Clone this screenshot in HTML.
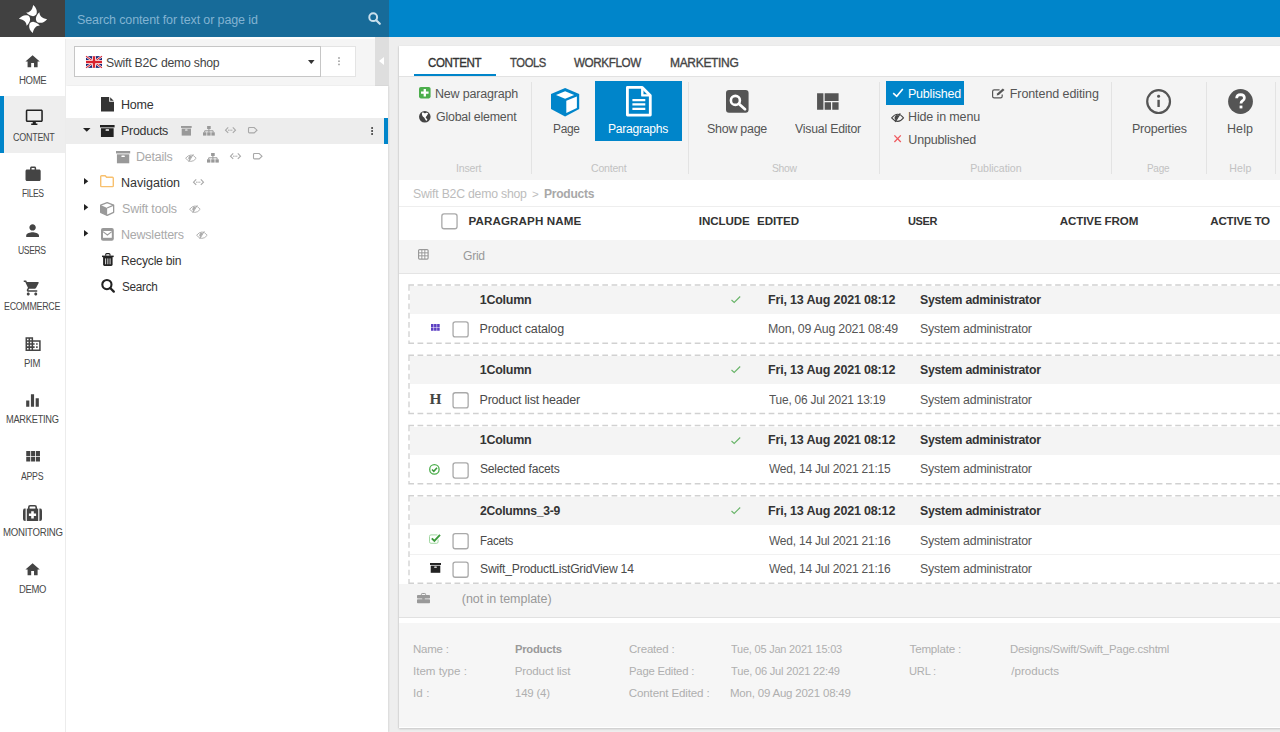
<!DOCTYPE html>
<html lang="en"><head><meta charset="utf-8"><title>Swift B2C demo shop - Products</title>
<style>
html,body{margin:0;padding:0;}
body{width:1280px;height:732px;overflow:hidden;position:relative;background:#eeeeee;font-family:"Liberation Sans",sans-serif;}
.b{position:absolute;}
.t{position:absolute;transform-origin:0 50%;white-space:pre;line-height:16px;height:16px;font-family:"Liberation Sans",sans-serif;}
svg{position:absolute;overflow:visible;}
.cb{position:absolute;width:14px;height:14px;border:1.3px solid #ababab;border-radius:2.5px;background:#fff;}
.sep{position:absolute;top:81.5px;height:92px;width:1px;background:#e3e3e3;}

</style></head>
<body>
<div class="b" style="left:0px;top:0px;width:65px;height:37px;background:#414141;"></div>
<div class="b" style="left:65px;top:0px;width:324px;height:37px;background:#176b99;"></div>
<div class="b" style="left:389px;top:0px;width:891px;height:37px;background:#0085ca;"></div>
<div class="b" style="left:0px;top:37px;width:65px;height:695px;background:#fff;"></div>
<div class="b" style="left:65px;top:37px;width:1px;height:695px;background:#ececec;"></div>
<div class="b" style="left:0px;top:96px;width:65px;height:56.5px;background:#eeeeee;"></div>
<div class="b" style="left:0px;top:96px;width:4px;height:56.5px;background:#0085ca;"></div>
<div class="b" style="left:66px;top:37px;width:323px;height:49px;background:#f5f5f5;"></div>
<div class="b" style="left:65px;top:37px;width:310px;height:1.7px;background:#fdfdfd;"></div><!--whiteband-->
<div class="b" style="left:375px;top:37px;width:14px;height:49px;background:#dedede;"></div>
<div class="b" style="left:66px;top:86px;width:322px;height:646px;background:#fff;box-shadow:1px 0 1.5px rgba(0,0,0,.09);"></div>
<div class="b" style="left:66px;top:118px;width:322px;height:26px;background:#ededed;"></div>
<div class="b" style="left:384px;top:118px;width:4px;height:26px;background:#0085ca;"></div>
<div class="b" style="left:74.3px;top:46.3px;width:247px;height:31px;background:#fff;box-sizing:border-box;border:1px solid #c6c6c6;"></div>
<div class="b" style="left:321.3px;top:46.3px;width:35px;height:31px;background:#fff;box-sizing:border-box;border:1px solid #e4e4e4;border-left:none;"></div>
<div class="b" style="left:398.8px;top:46.2px;width:890px;height:681.6px;background:#fff;box-shadow:0 1px 2px rgba(0,0,0,.17), -1px 0 1px rgba(0,0,0,.04);"></div>
<div class="b" style="left:413.5px;top:74px;width:82px;height:2px;background:#0085ca;"></div>
<div class="b" style="left:399px;top:76px;width:890px;height:1px;background:#e2e2e2;"></div>
<div class="b" style="left:399px;top:77px;width:890px;height:103px;background:#f4f4f4;"></div>
<div class="sep" style="left:530.5px"></div>
<div class="sep" style="left:687.5px"></div>
<div class="sep" style="left:879.0px"></div>
<div class="sep" style="left:1110.5px"></div>
<div class="sep" style="left:1205.5px"></div>
<div class="sep" style="left:1275.0px"></div>
<div class="b" style="left:595px;top:81.25px;width:87.3px;height:59.5px;background:#0085ca;"></div>
<div class="b" style="left:886px;top:81.25px;width:77.8px;height:23.3px;background:#0085ca;"></div>
<div class="b" style="left:399px;top:206px;width:890px;height:1px;background:#eeeeee;"></div>
<div class="b" style="left:399px;top:240px;width:890px;height:33.5px;background:#f4f4f4;"></div>
<div class="b" style="left:399px;top:273px;width:890px;height:1px;background:#e4e4e4;"></div>
<div class="b" style="left:410px;top:286px;width:880px;height:28px;background:#f4f4f4;"></div>
<svg style="left:0;top:0" width="1280" height="732"><path d="M408.3 285.0H1290M409 285.0V343.25M408.3 343.25H1290" fill="none" stroke="#d1d1d1" stroke-width="1.35" stroke-dasharray="5.7 3.54"/></svg>
<div class="b" style="left:410px;top:356.25px;width:880px;height:28px;background:#f4f4f4;"></div>
<svg style="left:0;top:0" width="1280" height="732"><path d="M408.3 355.25H1290M409 355.25V413.5M408.3 413.5H1290" fill="none" stroke="#d1d1d1" stroke-width="1.35" stroke-dasharray="5.7 3.54"/></svg>
<div class="b" style="left:410px;top:426.5px;width:880px;height:28px;background:#f4f4f4;"></div>
<svg style="left:0;top:0" width="1280" height="732"><path d="M408.3 425.5H1290M409 425.5V483.75M408.3 483.75H1290" fill="none" stroke="#d1d1d1" stroke-width="1.35" stroke-dasharray="5.7 3.54"/></svg>
<div class="b" style="left:410px;top:496.75px;width:880px;height:28px;background:#f4f4f4;"></div>
<svg style="left:0;top:0" width="1280" height="732"><path d="M408.3 495.75H1290M409 495.75V583.25M408.3 583.25H1290" fill="none" stroke="#d1d1d1" stroke-width="1.35" stroke-dasharray="5.7 3.54"/></svg>
<div class="b" style="left:410px;top:553.5px;width:880px;height:1px;background:#f1f1f1;"></div>
<div class="b" style="left:399px;top:584px;width:890px;height:33.5px;background:#f4f4f4;"></div>
<div class="b" style="left:399px;top:617px;width:890px;height:1.1px;background:#e1e1e1;"></div>
<div class="b" style="left:399px;top:623px;width:890px;height:104px;background:#f6f6f6;"></div>
<svg style="left:0;top:0" width="1280" height="732"><rect x="441.85" y="213.95" width="15.20" height="14.80" rx="2.2" fill="#fff" stroke="#a9a9a9" stroke-width="1.3"/></svg>
<svg style="left:0;top:0" width="1280" height="732"><rect x="453.05" y="321.85" width="15.10" height="15.10" rx="2.2" fill="#fff" stroke="#a9a9a9" stroke-width="1.3"/></svg>
<svg style="left:0;top:0" width="1280" height="732"><rect x="453.05" y="392.75" width="15.10" height="15.10" rx="2.2" fill="#fff" stroke="#a9a9a9" stroke-width="1.3"/></svg>
<svg style="left:0;top:0" width="1280" height="732"><rect x="453.05" y="462.95" width="15.10" height="15.10" rx="2.2" fill="#fff" stroke="#a9a9a9" stroke-width="1.3"/></svg>
<svg style="left:0;top:0" width="1280" height="732"><rect x="453.05" y="533.65" width="15.10" height="15.10" rx="2.2" fill="#fff" stroke="#a9a9a9" stroke-width="1.3"/></svg>
<svg style="left:0;top:0" width="1280" height="732"><rect x="453.05" y="562.15" width="15.10" height="15.10" rx="2.2" fill="#fff" stroke="#a9a9a9" stroke-width="1.3"/></svg>
<svg style="left:16.6px;top:2.6000000000000014px" width="32" height="32" viewBox="-16 -16 32 32" ><path d="M0.2,-14.1 C2.9,-11.8 4.4,-8.8 3.7,-5.7 C3.3,-3.7 1.4,-2.7 -0.8,-2.9 C-3.2,-3.3 -5.2,-4.6 -6.8,-6.4 C-3.2,-6.5 -0.8,-8.8 0.2,-14.1 Z" fill="#fff" transform="rotate(0)"/><path d="M0.2,-14.1 C2.9,-11.8 4.4,-8.8 3.7,-5.7 C3.3,-3.7 1.4,-2.7 -0.8,-2.9 C-3.2,-3.3 -5.2,-4.6 -6.8,-6.4 C-3.2,-6.5 -0.8,-8.8 0.2,-14.1 Z" fill="#fff" transform="rotate(90)"/><path d="M0.2,-14.1 C2.9,-11.8 4.4,-8.8 3.7,-5.7 C3.3,-3.7 1.4,-2.7 -0.8,-2.9 C-3.2,-3.3 -5.2,-4.6 -6.8,-6.4 C-3.2,-6.5 -0.8,-8.8 0.2,-14.1 Z" fill="#fff" transform="rotate(180)"/><path d="M0.2,-14.1 C2.9,-11.8 4.4,-8.8 3.7,-5.7 C3.3,-3.7 1.4,-2.7 -0.8,-2.9 C-3.2,-3.3 -5.2,-4.6 -6.8,-6.4 C-3.2,-6.5 -0.8,-8.8 0.2,-14.1 Z" fill="#fff" transform="rotate(270)"/></svg>
<svg style="left:24.15px;top:52.61px" width="17.2" height="17.2" viewBox="0 0 24 24" ><path d="M10 20v-6h4v6h5v-8h3L12 3 2 12h3v8z" fill="#444"/></svg>
<svg style="left:25.3px;top:108.4px" width="18.6" height="18.6" viewBox="0 0 24 24" ><path d="M21 2H3c-1.1 0-2 .9-2 2v12c0 1.1.9 2 2 2h7v2H8v2h8v-2h-2v-2h7c1.1 0 2-.9 2-2V4c0-1.1-.9-2-2-2zm0 14H3V4h18v12z" fill="#222"/></svg>
<svg style="left:23.5px;top:165.38px" width="18.2" height="18.2" viewBox="0 0 24 24" ><path d="M20 6h-4V4c0-1.11-.89-2-2-2h-4c-1.11 0-2 .89-2 2v2H4c-1.11 0-1.99.89-1.99 2L2 19c0 1.11.89 2 2 2h16c1.11 0 2-.89 2-2V8c0-1.11-.89-2-2-2zm-6 0h-4V4h4v2z" fill="#444"/></svg>
<svg style="left:23.15px;top:221.35px" width="19.2" height="19.2" viewBox="0 0 24 24" ><path d="M12 12c2.21 0 4-1.79 4-4s-1.79-4-4-4-4 1.79-4 4 1.79 4 4 4zm0 2c-2.67 0-8 1.34-8 4v2h16v-2c0-2.66-5.33-4-8-4z" fill="#444"/></svg>
<svg style="left:23.38px;top:278.5px" width="18" height="18" viewBox="0 0 24 24" ><path d="M7 18c-1.1 0-1.99.9-1.99 2S5.9 22 7 22s2-.9 2-2-.9-2-2-2zM1 2v2h2l3.6 7.59-1.35 2.45c-.16.28-.25.61-.25.96 0 1.1.9 2 2 2h12v-2H7.42c-.14 0-.25-.11-.25-.25l.03-.12.9-1.63h7.45c.75 0 1.41-.41 1.75-1.03l3.58-6.49c.08-.14.12-.31.12-.48 0-.55-.45-1-1-1H5.21l-.94-2H1zm16 16c-1.1 0-1.99.9-1.99 2s.89 2 1.99 2 2-.9 2-2-.9-2-2-2z" fill="#444"/></svg>
<svg style="left:23.6px;top:334.85px" width="18.2" height="18.2" viewBox="0 0 24 24" ><path d="M12 7V3H2v18h20V7H12zM6 19H4v-2h2v2zm0-4H4v-2h2v2zm0-4H4V9h2v2zm0-4H4V5h2v2zm4 12H8v-2h2v2zm0-4H8v-2h2v2zm0-4H8V9h2v2zm0-4H8V5h2v2zm10 12h-8v-2h2v-2h-2v-2h2v-2h-2V9h8v10zm-2-8h-2v2h2v-2zm0 4h-2v2h2v-2z" fill="#444"/></svg>
<svg style="left:23.4px;top:391.15px" width="19" height="19" viewBox="0 0 24 24" ><path d="M10 20h4V4h-4v16zm-6 0h4v-8H4v8zM16 9v11h4V9h-4z" fill="#444"/></svg>
<svg style="left:23.05px;top:447.15px" width="19.4" height="19.4" viewBox="0 0 24 24" ><path d="M4 11h5V5H4v6zm0 7h5v-6H4v6zm6 0h5v-6h-5v6zm6 0h5v-6h-5v6zm-6-7h5V5h-5v6zm6-6v6h5V5h-5z" fill="#444"/></svg>
<svg style="left:24.15px;top:561.21px" width="17.2" height="17.2" viewBox="0 0 24 24" ><path d="M10 20v-6h4v6h5v-8h3L12 3 2 12h3v8z" fill="#444"/></svg>
<svg style="left:23.4px;top:505px" width="19" height="16" viewBox="0 0 19 16" ><path d="M5.8 4V2.2Q5.8 .8 7.2 .8H11.8Q13.2 .8 13.2 2.2V4" fill="none" stroke="#444" stroke-width="1.6"/><path d="M2 3.6H2.6V16H2Q0 16 0 14V5.6Q0 3.6 2 3.6Z" fill="#444"/><path d="M17 3.6H16.4V16H17Q19 16 19 14V5.6Q19 3.6 17 3.6Z" fill="#444"/><rect x="3.8" y="3.6" width="11.4" height="12.4" fill="#444"/><path d="M8.2 6.2H10.8V8.5H13.1V11.1H10.8V13.4H8.2V11.1H5.9V8.5H8.2Z" fill="#fff"/></svg>
<svg style="left:368px;top:12px" width="13" height="13" viewBox="0 0 13 13" ><circle cx="5.2" cy="5.2" r="3.9" fill="none" stroke="#c9dfec" stroke-width="2"/><path d="M8.2 8.2L11.8 11.8" stroke="#c9dfec" stroke-width="2.2" stroke-linecap="round"/></svg>
<svg style="left:379px;top:56.8px" width="5" height="8" viewBox="0 0 5 8" ><path d="M5 0V8L0 4Z" fill="#fff"/></svg>
<svg style="left:86px;top:56px" width="16" height="12" viewBox="0 0 60 44" ><rect width="60" height="44" fill="#1b2a7a"/><path d="M0 0L60 44M60 0L0 44" stroke="#fff" stroke-width="9"/><path d="M0 0L60 44M60 0L0 44" stroke="#d8232f" stroke-width="4"/><path d="M30 0V44M0 22H60" stroke="#fff" stroke-width="15"/><path d="M30 0V44M0 22H60" stroke="#d8232f" stroke-width="9"/></svg>
<svg style="left:308.4px;top:59.7px" width="6.6" height="4.1" viewBox="0 0 6.6 4.1" ><path d="M0 0H6.6L3.3 4.1Z" fill="#333"/></svg>
<svg style="left:337.7px;top:57.3px" width="2" height="8.4" viewBox="0 0 2 8.4" ><circle cx="1" cy="1" r=".9" fill="#a0a0a0"/><circle cx="1" cy="4.2" r=".9" fill="#a0a0a0"/><circle cx="1" cy="7.4" r=".9" fill="#a0a0a0"/></svg>
<svg style="left:370.8px;top:126.6px" width="2.2" height="8" viewBox="0 0 2.2 8" ><circle cx="1.1" cy="1" r="1" fill="#333"/><circle cx="1.1" cy="4" r="1" fill="#333"/><circle cx="1.1" cy="7" r="1" fill="#333"/></svg>
<svg style="left:101.2px;top:96.5px" width="13" height="14.5" viewBox="0 0 13 14.5" ><path d="M0 0H8.2V4.8H13V14.5H0Z" fill="#333"/><path d="M9.2 0.3L12.7 3.8H9.2Z" fill="#333"/></svg>
<svg style="left:82.8px;top:127.7px" width="7.5" height="3.8" viewBox="0 0 7.5 3.8" ><path d="M0 0H7.5L3.75 3.8Z" fill="#222"/></svg>
<svg style="left:84.4px;top:178.0px" width="4.3" height="6.4" viewBox="0 0 4.3 6.4" ><path d="M0 0L4.3 3.2L0 6.4Z" fill="#222"/></svg>
<svg style="left:84.4px;top:203.70000000000002px" width="4.3" height="6.4" viewBox="0 0 4.3 6.4" ><path d="M0 0L4.3 3.2L0 6.4Z" fill="#222"/></svg>
<svg style="left:84.4px;top:229.60000000000002px" width="4.3" height="6.4" viewBox="0 0 4.3 6.4" ><path d="M0 0L4.3 3.2L0 6.4Z" fill="#222"/></svg>
<svg style="left:100.2px;top:124.8px" width="14.6" height="12" viewBox="0 0 14.6 12" ><rect x="0" y="0" width="14.6" height="2.40" fill="#222"/><rect x="0.95" y="3.24" width="12.70" height="8.76" fill="#222"/><rect x="5.55" y="4.32" width="3.50" height="1.44" rx="0.5" fill="#fff"/></svg>
<svg style="left:115.5px;top:150.6px" width="14.2" height="12.3" viewBox="0 0 14.2 12.3" ><rect x="0" y="0" width="14.2" height="2.46" fill="#999"/><rect x="0.92" y="3.32" width="12.35" height="8.98" fill="#999"/><rect x="5.40" y="4.43" width="3.41" height="1.48" rx="0.5" fill="#fff"/></svg>
<svg style="left:181.1px;top:126.4px" width="10.7" height="9.6" viewBox="0 0 10.7 9.6" ><rect x="0" y="0" width="10.7" height="1.92" fill="#999"/><rect x="0.70" y="2.59" width="9.31" height="7.01" fill="#999"/><rect x="4.07" y="3.46" width="2.57" height="1.15" rx="0.5" fill="#fff"/></svg>
<svg style="left:429.8px;top:563.3px" width="11" height="9.8" viewBox="0 0 11 9.8" ><rect x="0" y="0" width="11" height="1.96" fill="#222"/><rect x="0.72" y="2.65" width="9.57" height="7.15" fill="#222"/><rect x="4.18" y="3.53" width="2.64" height="1.18" rx="0.5" fill="#fff"/></svg>
<svg style="left:202.8px;top:126.4px" width="11.8" height="9.6" viewBox="0 0 11.8 9.6" ><rect x="4.1" y="0" width="3.6" height="3" fill="#999"/><path d="M5.9 3V4.8M1.7 6.4V4.8H10.1V6.4M5.9 4.8V6.4" stroke="#999" stroke-width="1" fill="none"/><rect x="0" y="6.3" width="3.4" height="3.3" fill="#999"/><rect x="4.2" y="6.3" width="3.4" height="3.3" fill="#999"/><rect x="8.4" y="6.3" width="3.4" height="3.3" fill="#999"/></svg>
<svg style="left:206.9px;top:152.5px" width="11.8" height="9.6" viewBox="0 0 11.8 9.6" ><rect x="4.1" y="0" width="3.6" height="3" fill="#999"/><path d="M5.9 3V4.8M1.7 6.4V4.8H10.1V6.4M5.9 4.8V6.4" stroke="#999" stroke-width="1" fill="none"/><rect x="0" y="6.3" width="3.4" height="3.3" fill="#999"/><rect x="4.2" y="6.3" width="3.4" height="3.3" fill="#999"/><rect x="8.4" y="6.3" width="3.4" height="3.3" fill="#999"/></svg>
<svg style="left:225.2px;top:127.2px" width="11" height="6.4" viewBox="0 0 11 6.4" ><path d="M3.2 .4L.5 3.2L3.2 6M7.8 .4L10.5 3.2L7.8 6" fill="none" stroke="#a8a8a8" stroke-width="1.1"/><path d="M3 3.2H8" stroke="#a8a8a8" stroke-width="1" stroke-dasharray="1.6 .7"/></svg>
<svg style="left:229.5px;top:153.4px" width="11" height="6.4" viewBox="0 0 11 6.4" ><path d="M3.2 .4L.5 3.2L3.2 6M7.8 .4L10.5 3.2L7.8 6" fill="none" stroke="#a8a8a8" stroke-width="1.1"/><path d="M3 3.2H8" stroke="#a8a8a8" stroke-width="1" stroke-dasharray="1.6 .7"/></svg>
<svg style="left:192.5px;top:179px" width="11" height="6.4" viewBox="0 0 11 6.4" ><path d="M3.2 .4L.5 3.2L3.2 6M7.8 .4L10.5 3.2L7.8 6" fill="none" stroke="#a8a8a8" stroke-width="1.1"/><path d="M3 3.2H8" stroke="#a8a8a8" stroke-width="1" stroke-dasharray="1.6 .7"/></svg>
<svg style="left:248.3px;top:127.2px" width="9.6" height="6.4" viewBox="0 0 9.6 6.4" ><path d="M1.4 .5H6.2L9 3.2L6.2 5.9H1.4Q.5 5.9 .5 5V1.4Q.5 .5 1.4 .5Z" fill="none" stroke="#a8a8a8" stroke-width="1.1"/></svg>
<svg style="left:252.6px;top:153.4px" width="9.6" height="6.4" viewBox="0 0 9.6 6.4" ><path d="M1.4 .5H6.2L9 3.2L6.2 5.9H1.4Q.5 5.9 .5 5V1.4Q.5 .5 1.4 .5Z" fill="none" stroke="#a8a8a8" stroke-width="1.1"/></svg>
<svg style="left:184.8px;top:153.6px" width="11.8" height="8.2" viewBox="0 0 11.8 8.2" ><path d="M.6 4.3Q3.2 1 6 1Q8.8 1 11.2 4.3Q8.8 7.4 6 7.4Q3.2 7.4 .6 4.3Z" fill="none" stroke="#aaa" stroke-width="0.9"/><path d="M6.9 2.1A2.3 2.3 0 1 0 4.5 6.3Z" fill="#aaa"/><path d="M8.3 .2L3.7 8" stroke="#aaa" stroke-width="1.0"/></svg>
<svg style="left:189px;top:205px" width="11.8" height="8.2" viewBox="0 0 11.8 8.2" ><path d="M.6 4.3Q3.2 1 6 1Q8.8 1 11.2 4.3Q8.8 7.4 6 7.4Q3.2 7.4 .6 4.3Z" fill="none" stroke="#aaa" stroke-width="0.9"/><path d="M6.9 2.1A2.3 2.3 0 1 0 4.5 6.3Z" fill="#aaa"/><path d="M8.3 .2L3.7 8" stroke="#aaa" stroke-width="1.0"/></svg>
<svg style="left:196.2px;top:231px" width="11.8" height="8.2" viewBox="0 0 11.8 8.2" ><path d="M.6 4.3Q3.2 1 6 1Q8.8 1 11.2 4.3Q8.8 7.4 6 7.4Q3.2 7.4 .6 4.3Z" fill="none" stroke="#aaa" stroke-width="0.9"/><path d="M6.9 2.1A2.3 2.3 0 1 0 4.5 6.3Z" fill="#aaa"/><path d="M8.3 .2L3.7 8" stroke="#aaa" stroke-width="1.0"/></svg>
<svg style="left:100.2px;top:175.1px" width="14" height="12.3" viewBox="0 0 14 12.3" ><path d="M1.6 .7H5.2L6.6 2.3H12.4Q13.3 2.3 13.3 3.2V10.7Q13.3 11.6 12.4 11.6H1.6Q.7 11.6 .7 10.7V1.6Q.7 .7 1.6 .7Z" fill="#fff" stroke="#f8c06e" stroke-width="1.4"/></svg>
<svg style="left:99.9px;top:201.8px" width="14.3" height="14" viewBox="0 0 14.3 14" ><path d="M7.15 0.65L13.65 3.08V10.36L7.15 13.35L0.65 10.36V3.08Z" fill="#fff" stroke="#999" stroke-width="1.3" stroke-linejoin="round"/><path d="M0.65 3.08L7.15 6.02V13.35L0.65 10.36Z" fill="#999"/><path d="M7.15 6.02L13.65 3.08" stroke="#999" stroke-width="1.3" fill="none"/></svg>
<svg style="left:101.2px;top:228.1px" width="12.8" height="12.8" viewBox="0 0 12.8 12.8" ><rect x="0" y="0" width="12.8" height="12.8" rx="2" fill="#999"/><rect x="2" y="3" width="8.8" height="6.8" fill="#fff"/><path d="M2 3.6L6.4 7L10.8 3.6" fill="none" stroke="#999" stroke-width="1.1"/></svg>
<svg style="left:102px;top:253px" width="11.7" height="12.9" viewBox="0 0 11.7 12.9" ><path d="M3.7 2.8V1.6Q3.7 .6 4.7 .6H7Q8 .6 8 1.6V2.8" fill="none" stroke="#222" stroke-width="1.1"/><rect x="0" y="2.6" width="11.7" height="1.5" fill="#222"/><path d="M1.1 4.1H10.6V11.6Q10.6 12.9 9.3 12.9H2.4Q1.1 12.9 1.1 11.6Z" fill="#222"/><path d="M3.6 5.4V11.3M5.85 5.4V11.3M8.1 5.4V11.3" stroke="#ddd" stroke-width="1"/></svg>
<svg style="left:100.6px;top:279.4px" width="13.6" height="13.4" viewBox="0 0 13.6 13.4" ><circle cx="5.9" cy="5.6" r="4.6" fill="none" stroke="#222" stroke-width="2.1"/><path d="M9.2 9L12.8 12.6" stroke="#222" stroke-width="2.3" stroke-linecap="round"/></svg>
<svg style="left:418.9px;top:87.4px" width="11.6" height="11.4" viewBox="0 0 11.6 11.4" ><rect width="11.6" height="11.4" rx="1.8" fill="#4cae4c"/><path d="M5.8 1.9V9.5M2 5.7H9.6" stroke="#fff" stroke-width="2.3"/></svg>
<svg style="left:418.9px;top:110.7px" width="11.6" height="11.6" viewBox="0 0 11.6 11.6" ><circle cx="5.8" cy="5.8" r="5.8" fill="#444"/><path d="M3.2 1.6C4.5 1.2 5.3 2.6 6.4 2.2C7.4 1.8 8.6 1.6 9.3 2.6C8.4 3.4 8.2 4.6 7.2 5.4C6.4 6 6.8 7.2 7.8 7.8C8.6 8.2 8.4 9.4 7.6 9.8C6.6 9.4 6.2 8.2 5.6 7.2C5 6.2 3.8 6 3.4 4.8C3 3.8 2.6 2.6 3.2 1.6Z" fill="#fff"/></svg>
<svg style="left:551.4px;top:88.3px" width="28.2" height="28.4" viewBox="0 0 28.2 28.4"><path d="M14.1 0L28.2 6.1V21.1L14.1 28.4L0 21.1V6.1Z" fill="#0085ca"/><path d="M14.1 3.2L23.2 7L14.1 10.8L5 7Z" fill="#fff"/><path d="M15.3 12.8L25.9 8.5V19.9L15.3 24.9Z" fill="#fff"/></svg>
<svg style="left:625.6px;top:86.2px" width="25.7" height="30.5" viewBox="0 0 25.7 30.5"><path d="M1.4 1.4H16.3L24.3 9.4V29.1H1.4Z" fill="none" stroke="#fff" stroke-width="2.8" stroke-linejoin="round"/><path d="M16.3 1.4V9.4H24.3" fill="none" stroke="#fff" stroke-width="2.4" stroke-linejoin="round"/><path d="M6.4 14.1H19.3M6.4 18.4H19.3M6.4 22.8H19.3" stroke="#fff" stroke-width="2.3"/></svg>
<svg style="left:725.5px;top:90.2px" width="22.6" height="22.7" viewBox="0 0 22.6 22.7"><rect width="22.6" height="22.7" rx="3" fill="#555"/><circle cx="9.4" cy="10.4" r="4.5" fill="none" stroke="#fff" stroke-width="2.6"/><path d="M12.8 13.8L19 19.2" stroke="#fff" stroke-width="2.8" stroke-linecap="round"/></svg>
<svg style="left:812.22px;top:86.68px" width="30.4" height="30.4" viewBox="0 0 24 24" ><path d="M10 18h5v-6h-5v6zm-6 0h5V5H4v13zm12 0h5v-6h-5v6zM10 5v6h11V5H10z" fill="#555"/></svg>
<svg style="left:892px;top:88px" width="12" height="9.5" viewBox="0 0 12 9.5" ><path d="M1.2 5.2L4.7 8.3L10.8 1" fill="none" stroke="#fff" stroke-width="1.6"/></svg>
<svg style="left:890.9px;top:112.5px" width="13.2" height="9.4" viewBox="0 0 11.8 8.2" ><path d="M.6 4.3Q3.2 1 6 1Q8.8 1 11.2 4.3Q8.8 7.4 6 7.4Q3.2 7.4 .6 4.3Z" fill="none" stroke="#444" stroke-width="0.95"/><path d="M6.9 2.1A2.3 2.3 0 1 0 4.5 6.3Z" fill="#444"/><path d="M8.3 .2L3.7 8" stroke="#444" stroke-width="1.05"/></svg>
<svg style="left:894px;top:135.4px" width="7.2" height="7.4" viewBox="0 0 7.2 7.4" ><path d="M.4 .4L6.8 7M6.8 .4L.4 7" stroke="#ef5a5f" stroke-width="1.3"/></svg>
<svg style="left:992.2px;top:87.6px" width="13.4" height="10.4" viewBox="0 0 13.4 10.4" ><path d="M7.6 1.9H2.2Q.6 1.9 .6 3.5V8.2Q.6 9.8 2.2 9.8H8.6Q10.2 9.8 10.2 8.2V6.4" fill="none" stroke="#555" stroke-width="1.2"/><path d="M4.7 7.5L5.1 5.6L10.8 .4L12.5 2L6.8 7.1Z" fill="#555"/></svg>
<svg style="left:1146.4px;top:89.4px" width="25.2" height="25.2" viewBox="0 0 25.2 25.2"><circle cx="12.6" cy="12.6" r="11.4" fill="none" stroke="#555" stroke-width="2.2"/><circle cx="12.6" cy="7.3" r="1.5" fill="#555"/><rect x="11.4" y="10.8" width="2.4" height="7.2" fill="#555"/></svg>
<svg style="left:1228.1px;top:89.3px" width="25" height="25" viewBox="0 0 25 25"><circle cx="12.5" cy="12.5" r="12.4" fill="#555"/><path d="M8.6 9.3Q8.8 5.6 12.6 5.6Q16.4 5.7 16.4 8.9Q16.4 10.8 14.3 12Q13 12.8 13 14.4" fill="none" stroke="#fff" stroke-width="2.7"/><rect x="11.6" y="16.6" width="2.8" height="2.8" fill="#fff"/></svg>
<svg style="left:418px;top:249px" width="10.7" height="10.7" viewBox="0 0 10.7 10.7" ><rect x=".6" y=".6" width="9.5" height="9.5" rx="1" fill="#fff" stroke="#999" stroke-width="1.2"/><path d="M3.85 .6V10.1M6.85 .6V10.1M.6 3.85H10.1M.6 6.85H10.1" stroke="#999" stroke-width="1"/></svg>
<svg style="left:431.4px;top:323.7px" width="8.7" height="6.7" viewBox="0 0 17 13" ><path transform="translate(-4 -5)" d="M4 11h5V5H4v6zm0 7h5v-6H4v6zm6 0h5v-6h-5v6zm6 0h5v-6h-5v6zm-6-7h5V5h-5v6zm6-6v6h5V5h-5z" fill="#5b3ec2"/></svg>
<span class="t" style="left:429.6px;top:391px;font-family:'Liberation Serif',serif;font-weight:700;font-size:15.4px;color:#444;">H</span>
<svg style="left:429.2px;top:463.9px" width="10.8" height="10.8" viewBox="0 0 10.8 10.8" ><circle cx="5.4" cy="5.4" r="4.7" fill="none" stroke="#4cae4c" stroke-width="1.3"/><path d="M3 5.5L4.8 7.3L8 3.8" fill="none" stroke="#3c9a3c" stroke-width="1.6"/></svg>
<svg style="left:429.1px;top:534.4px" width="11.6" height="9.8" viewBox="0 0 11.6 9.8" ><path d="M8.4 .9H2Q.5 .9 .5 2.4V7.8Q.5 9.3 2 9.3H7.6Q9.1 9.3 9.1 7.8V5.6" fill="none" stroke="#a0d6a0" stroke-width="1"/><path d="M2.8 4.3L5.4 6.9L11 .9" fill="none" stroke="#3c9a3c" stroke-width="1.9"/></svg>
<svg style="left:416.8px;top:592.7px" width="13" height="10.2" viewBox="0 0 13 10.2" ><path d="M4.4 2V1.3Q4.4 .5 5.2 .5H7.8Q8.6 .5 8.6 1.3V2" fill="none" stroke="#999" stroke-width="1"/><rect x="0" y="2" width="13" height="3.6" rx=".8" fill="#999"/><rect x="0" y="6.2" width="13" height="4" rx=".8" fill="#999"/><rect x="5.2" y="5" width="2.6" height="1.8" fill="#999"/></svg>
<svg style="left:730.6px;top:295.59999999999997px" width="9.6" height="7.2" viewBox="0 0 9.6 7.2" ><path d="M.5 4L3.2 6.5L9.2 .5" fill="none" stroke="#68b468" stroke-width="1.1"/></svg>
<svg style="left:730.6px;top:366.09999999999997px" width="9.6" height="7.2" viewBox="0 0 9.6 7.2" ><path d="M.5 4L3.2 6.5L9.2 .5" fill="none" stroke="#68b468" stroke-width="1.1"/></svg>
<svg style="left:730.6px;top:436.59999999999997px" width="9.6" height="7.2" viewBox="0 0 9.6 7.2" ><path d="M.5 4L3.2 6.5L9.2 .5" fill="none" stroke="#68b468" stroke-width="1.1"/></svg>
<svg style="left:730.6px;top:507.09999999999997px" width="9.6" height="7.2" viewBox="0 0 9.6 7.2" ><path d="M.5 4L3.2 6.5L9.2 .5" fill="none" stroke="#68b468" stroke-width="1.1"/></svg>
<div id="texts">
<span class="t" style="left:77.00px;top:12.00px;font-size:12.5px;letter-spacing:-0.121px;color:#82b3d2;">Search content for text or page id</span>
<span class="t" style="left:18.72px;top:73.00px;font-size:10px;letter-spacing:-0.356px;color:#484848;transform:scaleX(0.9581);">HOME</span>
<span class="t" style="left:13.45px;top:130.00px;font-size:10px;letter-spacing:-0.310px;color:#484848;transform:scaleX(0.8999);">CONTENT</span>
<span class="t" style="left:21.57px;top:186.00px;font-size:10px;letter-spacing:-0.587px;color:#484848;transform:scaleX(0.8600);">FILES</span>
<span class="t" style="left:18.32px;top:243.00px;font-size:10px;letter-spacing:-0.443px;color:#484848;transform:scaleX(0.8600);">USERS</span>
<span class="t" style="left:4.26px;top:299.00px;font-size:10px;letter-spacing:-0.322px;color:#484848;transform:scaleX(0.8871);">ECOMMERCE</span>
<span class="t" style="left:24.12px;top:356.00px;font-size:10px;letter-spacing:-0.307px;color:#484848;transform:scaleX(0.9544);">PIM</span>
<span class="t" style="left:6.04px;top:412.00px;font-size:10px;letter-spacing:-0.277px;color:#484848;transform:scaleX(0.9256);">MARKETING</span>
<span class="t" style="left:21.30px;top:469.00px;font-size:10px;letter-spacing:-0.349px;color:#484848;transform:scaleX(0.8769);">APPS</span>
<span class="t" style="left:2.82px;top:525.00px;font-size:10px;letter-spacing:-0.258px;color:#484848;transform:scaleX(0.9605);">MONITORING</span>
<span class="t" style="left:18.83px;top:582.00px;font-size:10px;letter-spacing:-0.361px;color:#484848;transform:scaleX(0.9444);">DEMO</span>
<span class="t" style="left:105.51px;top:55.00px;font-size:12.5px;letter-spacing:-0.236px;color:#444;transform:scaleX(0.9805);">Swift B2C demo shop</span>
<span class="t" style="left:121.00px;top:97.00px;font-size:12.5px;letter-spacing:-0.250px;color:#333;">Home</span>
<span class="t" style="left:121.01px;top:123.00px;font-size:12.5px;letter-spacing:-0.242px;color:#333;transform:scaleX(0.9933);">Products</span>
<span class="t" style="left:135.76px;top:149.00px;font-size:12.5px;letter-spacing:-0.216px;color:#aaa;transform:scaleX(0.9942);">Details</span>
<span class="t" style="left:121.00px;top:175.00px;font-size:12.5px;letter-spacing:0.000px;color:#333;">Navigation</span>
<span class="t" style="left:121.50px;top:201.00px;font-size:12.5px;letter-spacing:-0.196px;color:#aaa;transform:scaleX(0.9993);">Swift tools</span>
<span class="t" style="left:121.00px;top:227.00px;font-size:12.5px;letter-spacing:-0.224px;color:#aaa;transform:scaleX(0.9998);">Newsletters</span>
<span class="t" style="left:121.03px;top:253.00px;font-size:12.5px;letter-spacing:-0.227px;color:#333;transform:scaleX(0.9715);">Recycle bin</span>
<span class="t" style="left:121.53px;top:279.00px;font-size:12.5px;letter-spacing:-0.287px;color:#333;transform:scaleX(0.9376);">Search</span>
<span class="t" style="left:427.54px;top:55.00px;font-size:12.5px;letter-spacing:-0.378px;color:#333;transform:scaleX(0.9220);-webkit-text-stroke:0.35px currentColor;">CONTENT</span>
<span class="t" style="left:510.00px;top:55.00px;font-size:12.5px;letter-spacing:-0.407px;color:#444;transform:scaleX(0.8973);-webkit-text-stroke:0.35px currentColor;">TOOLS</span>
<span class="t" style="left:574.23px;top:55.00px;font-size:12.5px;letter-spacing:-0.405px;color:#444;transform:scaleX(0.9324);-webkit-text-stroke:0.35px currentColor;">WORKFLOW</span>
<span class="t" style="left:669.78px;top:55.00px;font-size:12.5px;letter-spacing:-0.333px;color:#444;transform:scaleX(0.9597);-webkit-text-stroke:0.35px currentColor;">MARKETING</span>
<span class="t" style="left:435.00px;top:86.00px;font-size:12.5px;letter-spacing:-0.188px;color:#555;">New paragraph</span>
<span class="t" style="left:435.50px;top:109.00px;font-size:12.5px;letter-spacing:-0.226px;color:#555;transform:scaleX(0.9931);">Global element</span>
<span class="t" style="left:552.55px;top:121.00px;font-size:12.5px;letter-spacing:-0.339px;color:#555;transform:scaleX(0.9539);">Page</span>
<span class="t" style="left:608.03px;top:121.00px;font-size:12.5px;letter-spacing:-0.254px;color:#fff;transform:scaleX(0.9678);">Paragraphs</span>
<span class="t" style="left:707.00px;top:121.00px;font-size:12.5px;letter-spacing:-0.269px;color:#555;transform:scaleX(0.9984);">Show page</span>
<span class="t" style="left:794.50px;top:121.00px;font-size:12.5px;letter-spacing:-0.207px;color:#555;transform:scaleX(0.9812);">Visual Editor</span>
<span class="t" style="left:908.00px;top:86.00px;font-size:12.5px;letter-spacing:-0.219px;color:#fff;">Published</span>
<span class="t" style="left:908.00px;top:109.00px;font-size:12.5px;letter-spacing:-0.136px;color:#555;">Hide in menu</span>
<span class="t" style="left:908.25px;top:132.00px;font-size:12.5px;letter-spacing:-0.150px;color:#555;">Unpublished</span>
<span class="t" style="left:1009.75px;top:86.00px;font-size:12.5px;letter-spacing:-0.083px;color:#555;">Frontend editing</span>
<span class="t" style="left:1131.50px;top:121.00px;font-size:12.5px;letter-spacing:-0.216px;color:#555;transform:scaleX(0.9990);">Properties</span>
<span class="t" style="left:1227.00px;top:121.00px;font-size:12.5px;letter-spacing:0.083px;color:#555;">Help</span>
<span class="t" style="left:456.25px;top:160.00px;font-size:10.6px;letter-spacing:-0.181px;color:#c2c2c2;transform:scaleX(0.9962);">Insert</span>
<span class="t" style="left:591.25px;top:160.00px;font-size:10.6px;letter-spacing:-0.216px;color:#c2c2c2;transform:scaleX(0.9942);">Content</span>
<span class="t" style="left:771.51px;top:160.00px;font-size:10.6px;letter-spacing:-0.310px;color:#c2c2c2;transform:scaleX(0.9773);">Show</span>
<span class="t" style="left:970.25px;top:160.00px;font-size:10.6px;letter-spacing:-0.050px;color:#c2c2c2;">Publication</span>
<span class="t" style="left:1147.29px;top:160.00px;font-size:10.6px;letter-spacing:-0.295px;color:#c2c2c2;transform:scaleX(0.9403);">Page</span>
<span class="t" style="left:1229.25px;top:160.00px;font-size:10.6px;letter-spacing:0.083px;color:#c2c2c2;">Help</span>
<span class="t" style="left:413.26px;top:186.00px;font-size:12.5px;letter-spacing:-0.236px;color:#bcbcbc;transform:scaleX(0.9826);">Swift B2C demo shop</span>
<span class="t" style="left:532.00px;top:186.00px;font-size:11.6px;letter-spacing:-0.750px;color:#bcbcbc;">&gt;</span>
<span class="t" style="left:543.78px;top:186.00px;font-size:12.5px;letter-spacing:-0.275px;color:#a8a8a8;transform:scaleX(0.9642);font-weight:700;">Products</span>
<span class="t" style="left:468.50px;top:213.00px;font-size:11.6px;letter-spacing:0.115px;color:#333;font-weight:700;">PARAGRAPH NAME</span>
<span class="t" style="left:698.75px;top:213.00px;font-size:11.6px;letter-spacing:-0.083px;color:#333;font-weight:700;">INCLUDE</span>
<span class="t" style="left:757.00px;top:213.00px;font-size:11.6px;letter-spacing:-0.100px;color:#333;font-weight:700;">EDITED</span>
<span class="t" style="left:908.28px;top:213.00px;font-size:11.6px;letter-spacing:-0.388px;color:#333;transform:scaleX(0.9477);font-weight:700;">USER</span>
<span class="t" style="left:1059.75px;top:213.00px;font-size:11.6px;letter-spacing:-0.130px;color:#333;font-weight:700;">ACTIVE FROM</span>
<span class="t" style="left:1210.35px;top:213.00px;font-size:11.6px;letter-spacing:-0.237px;color:#333;font-weight:700;">ACTIVE TO</span>
<span class="t" style="left:462.52px;top:248.00px;font-size:12.5px;letter-spacing:-0.271px;color:#999;transform:scaleX(0.9683);">Grid</span>
<span class="t" style="left:479.75px;top:292.00px;font-size:12.5px;letter-spacing:-0.250px;color:#333;font-weight:700;">1Column</span>
<span class="t" style="left:768.00px;top:292.00px;font-size:12.5px;letter-spacing:-0.167px;color:#333;font-weight:700;">Fri, 13 Aug 2021 08:12</span>
<span class="t" style="left:919.51px;top:292.00px;font-size:12.5px;letter-spacing:-0.239px;color:#333;transform:scaleX(0.9812);font-weight:700;">System administrator</span>
<span class="t" style="left:479.75px;top:362.00px;font-size:12.5px;letter-spacing:-0.250px;color:#333;font-weight:700;">1Column</span>
<span class="t" style="left:768.00px;top:362.00px;font-size:12.5px;letter-spacing:-0.167px;color:#333;font-weight:700;">Fri, 13 Aug 2021 08:12</span>
<span class="t" style="left:919.51px;top:362.00px;font-size:12.5px;letter-spacing:-0.239px;color:#333;transform:scaleX(0.9812);font-weight:700;">System administrator</span>
<span class="t" style="left:479.75px;top:432.00px;font-size:12.5px;letter-spacing:-0.250px;color:#333;font-weight:700;">1Column</span>
<span class="t" style="left:768.00px;top:432.00px;font-size:12.5px;letter-spacing:-0.167px;color:#333;font-weight:700;">Fri, 13 Aug 2021 08:12</span>
<span class="t" style="left:919.51px;top:432.00px;font-size:12.5px;letter-spacing:-0.239px;color:#333;transform:scaleX(0.9812);font-weight:700;">System administrator</span>
<span class="t" style="left:480.26px;top:503.00px;font-size:12.5px;letter-spacing:-0.277px;color:#333;transform:scaleX(0.9731);font-weight:700;">2Columns_3-9</span>
<span class="t" style="left:768.00px;top:503.00px;font-size:12.5px;letter-spacing:-0.167px;color:#333;font-weight:700;">Fri, 13 Aug 2021 08:12</span>
<span class="t" style="left:919.51px;top:503.00px;font-size:12.5px;letter-spacing:-0.239px;color:#333;transform:scaleX(0.9812);font-weight:700;">System administrator</span>
<span class="t" style="left:479.50px;top:321.00px;font-size:12.5px;letter-spacing:-0.161px;color:#4a4a4a;">Product catalog</span>
<span class="t" style="left:767.76px;top:321.00px;font-size:12.5px;letter-spacing:-0.227px;color:#555;transform:scaleX(0.9905);">Mon, 09 Aug 2021 08:49</span>
<span class="t" style="left:919.51px;top:321.00px;font-size:12.5px;letter-spacing:-0.218px;color:#555;transform:scaleX(0.9883);">System administrator</span>
<span class="t" style="left:479.50px;top:392.00px;font-size:12.5px;letter-spacing:-0.194px;color:#4a4a4a;">Product list header</span>
<span class="t" style="left:768.51px;top:392.00px;font-size:12.5px;letter-spacing:-0.222px;color:#555;transform:scaleX(0.9506);">Tue, 06 Jul 2021 13:19</span>
<span class="t" style="left:919.51px;top:392.00px;font-size:12.5px;letter-spacing:-0.218px;color:#555;transform:scaleX(0.9883);">System administrator</span>
<span class="t" style="left:480.02px;top:461.00px;font-size:12.5px;letter-spacing:-0.218px;color:#4a4a4a;transform:scaleX(0.9670);">Selected facets</span>
<span class="t" style="left:768.75px;top:461.00px;font-size:12.5px;letter-spacing:-0.229px;color:#555;transform:scaleX(0.9573);">Wed, 14 Jul 2021 21:15</span>
<span class="t" style="left:919.51px;top:461.00px;font-size:12.5px;letter-spacing:-0.218px;color:#555;transform:scaleX(0.9883);">System administrator</span>
<span class="t" style="left:479.58px;top:533.00px;font-size:12.5px;letter-spacing:-0.273px;color:#4a4a4a;transform:scaleX(0.9239);">Facets</span>
<span class="t" style="left:768.75px;top:533.00px;font-size:12.5px;letter-spacing:-0.229px;color:#555;transform:scaleX(0.9573);">Wed, 14 Jul 2021 21:16</span>
<span class="t" style="left:919.51px;top:533.00px;font-size:12.5px;letter-spacing:-0.218px;color:#555;transform:scaleX(0.9883);">System administrator</span>
<span class="t" style="left:480.01px;top:561.00px;font-size:12.5px;letter-spacing:-0.219px;color:#4a4a4a;transform:scaleX(0.9709);">Swift_ProductListGridView 14</span>
<span class="t" style="left:768.75px;top:561.00px;font-size:12.5px;letter-spacing:-0.229px;color:#555;transform:scaleX(0.9573);">Wed, 14 Jul 2021 21:16</span>
<span class="t" style="left:919.51px;top:561.00px;font-size:12.5px;letter-spacing:-0.218px;color:#555;transform:scaleX(0.9883);">System administrator</span>
<span class="t" style="left:461.75px;top:591.00px;font-size:12.5px;letter-spacing:-0.031px;color:#999;">(not in template)</span>
<span class="t" style="left:413.01px;top:641.00px;font-size:11.6px;letter-spacing:-0.252px;color:#afafaf;transform:scaleX(0.9930);">Name :</span>
<span class="t" style="left:413.00px;top:663.00px;font-size:11.6px;letter-spacing:-0.025px;color:#afafaf;">Item type :</span>
<span class="t" style="left:413.00px;top:685.00px;font-size:11.6px;letter-spacing:0.083px;color:#afafaf;">Id :</span>
<span class="t" style="left:515.02px;top:641.00px;font-size:11.6px;letter-spacing:-0.255px;color:#9a9a9a;transform:scaleX(0.9693);font-weight:700;">Products</span>
<span class="t" style="left:514.75px;top:663.00px;font-size:11.6px;letter-spacing:-0.159px;color:#afafaf;">Product list</span>
<span class="t" style="left:514.76px;top:685.00px;font-size:11.6px;letter-spacing:-0.210px;color:#afafaf;transform:scaleX(0.9857);">149 (4)</span>
<span class="t" style="left:628.75px;top:641.00px;font-size:11.6px;letter-spacing:-0.204px;color:#afafaf;transform:scaleX(0.9918);">Created :</span>
<span class="t" style="left:628.52px;top:663.00px;font-size:11.6px;letter-spacing:-0.204px;color:#afafaf;transform:scaleX(0.9725);">Page Edited :</span>
<span class="t" style="left:628.75px;top:685.00px;font-size:11.6px;letter-spacing:-0.150px;color:#afafaf;">Content Edited :</span>
<span class="t" style="left:730.96px;top:641.00px;font-size:11.6px;letter-spacing:-0.214px;color:#afafaf;transform:scaleX(0.9453);">Tue, 05 Jan 2021 15:03</span>
<span class="t" style="left:730.96px;top:663.00px;font-size:11.6px;letter-spacing:-0.205px;color:#afafaf;transform:scaleX(0.9576);">Tue, 06 Jul 2021 22:49</span>
<span class="t" style="left:730.46px;top:685.00px;font-size:11.6px;letter-spacing:-0.211px;color:#afafaf;transform:scaleX(0.9915);">Mon, 09 Aug 2021 08:49</span>
<span class="t" style="left:909.55px;top:641.00px;font-size:11.6px;letter-spacing:-0.194px;color:#afafaf;">Template :</span>
<span class="t" style="left:909.08px;top:663.00px;font-size:11.6px;letter-spacing:-0.250px;color:#afafaf;transform:scaleX(0.9623);">URL :</span>
<span class="t" style="left:1010.47px;top:641.00px;font-size:11.6px;letter-spacing:-0.200px;color:#afafaf;transform:scaleX(0.9789);">Designs/Swift/Swift_Page.cshtml</span>
<span class="t" style="left:1011.20px;top:663.00px;font-size:11.6px;letter-spacing:0.037px;color:#afafaf;">/products</span>
</div>
</body></html>
